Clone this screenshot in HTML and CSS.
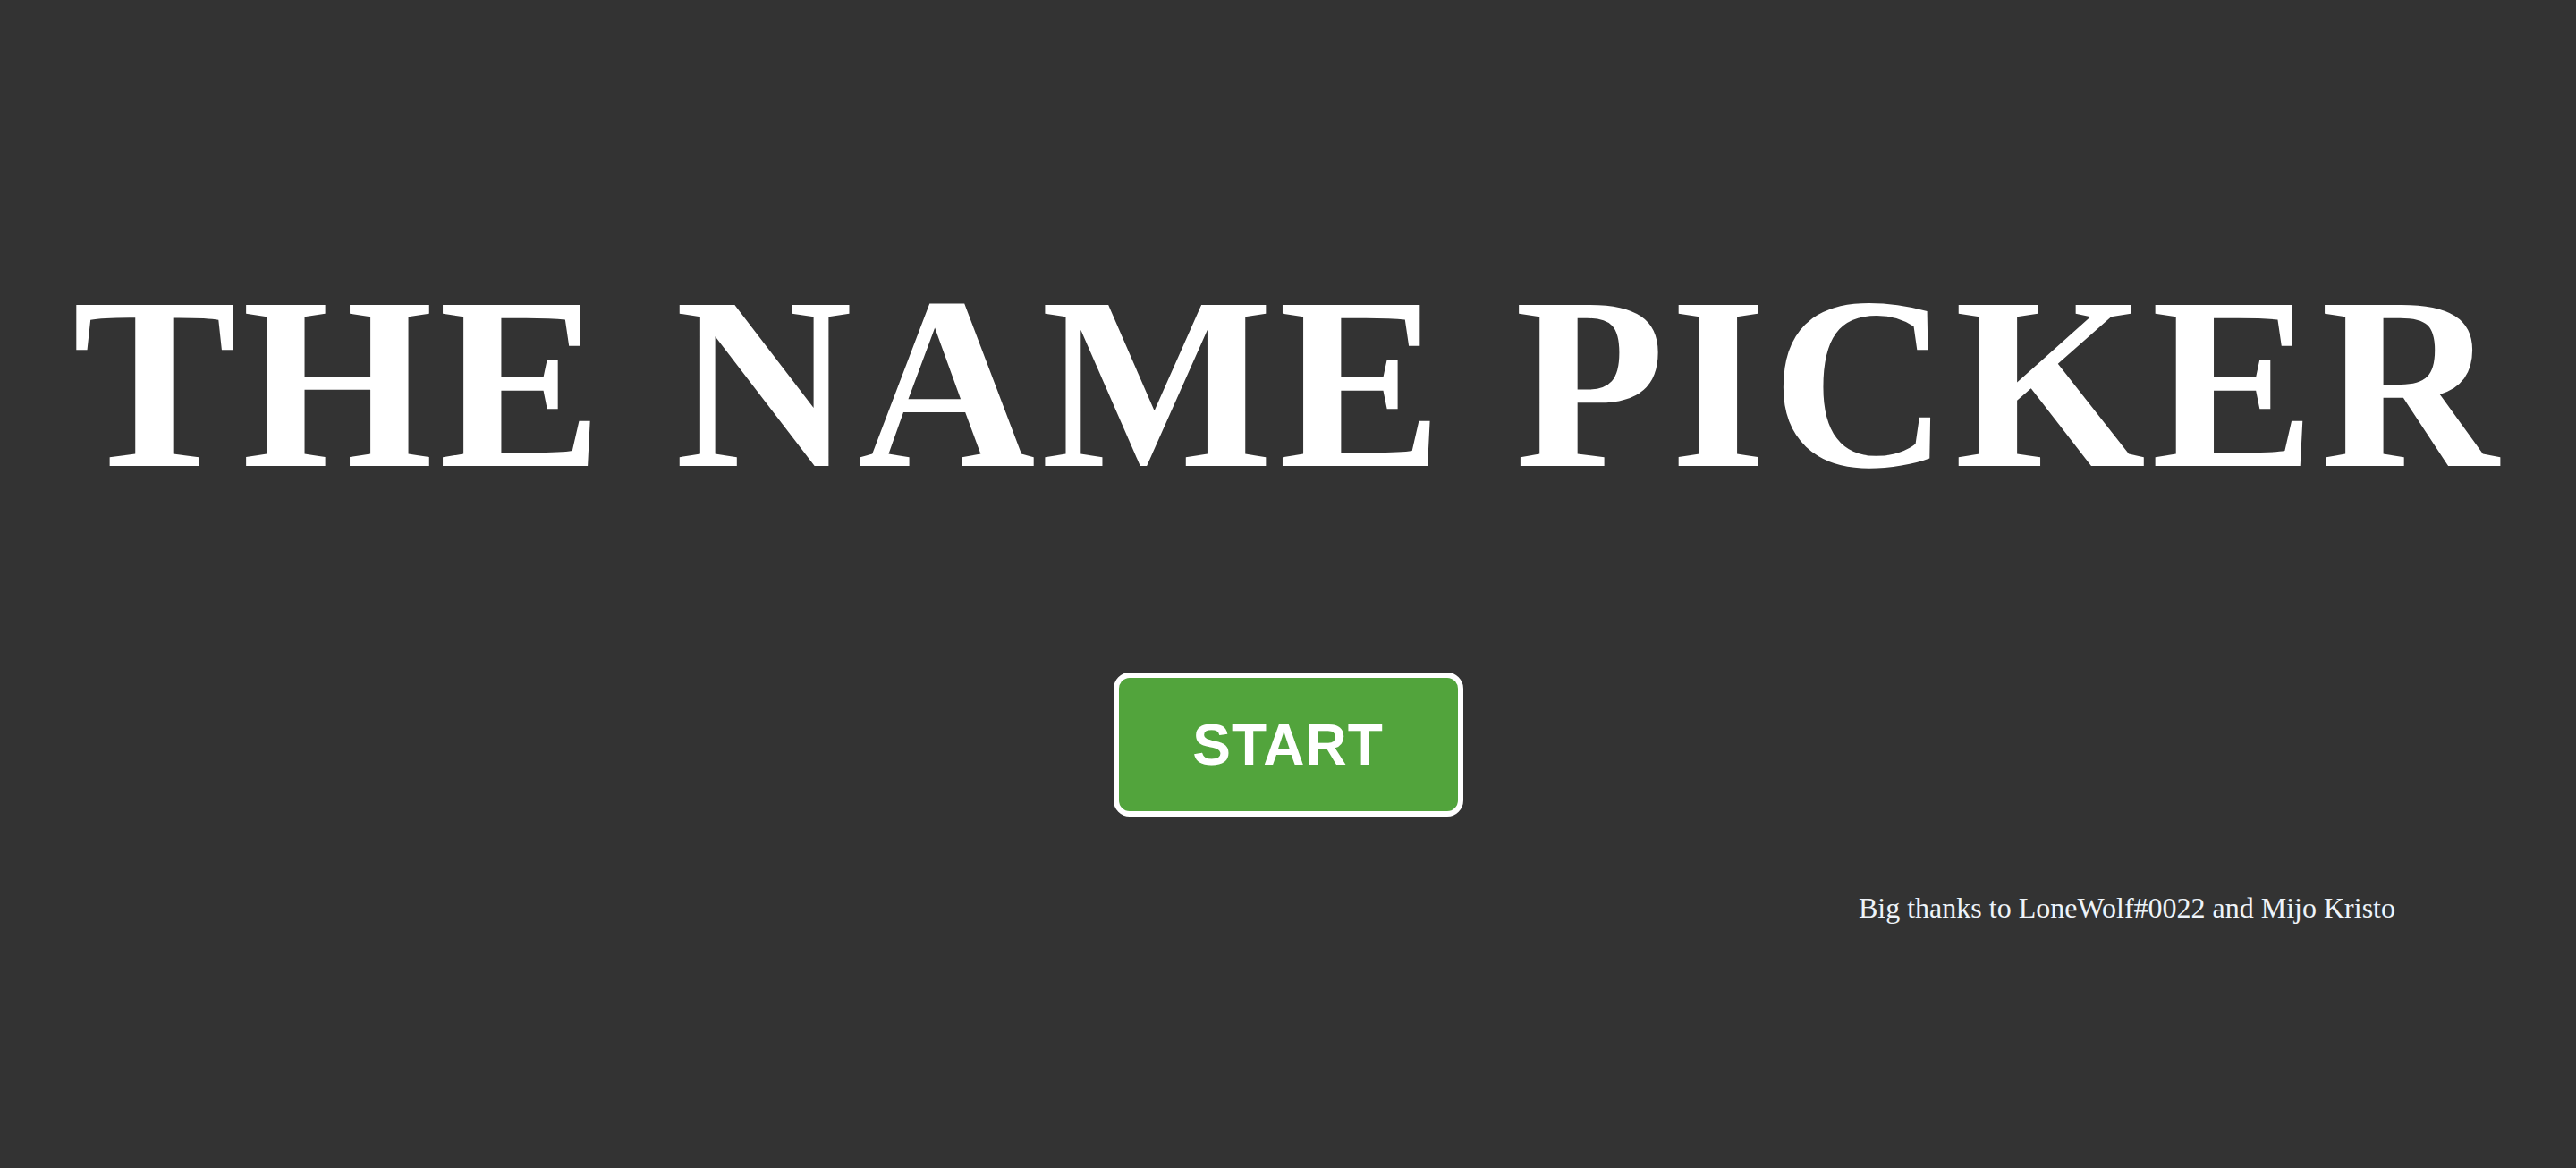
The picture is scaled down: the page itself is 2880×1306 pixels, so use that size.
FILE: index.html
```html
<!DOCTYPE html>
<html lang="en">
<head>
<meta charset="utf-8">
<title>The Name Picker</title>
<link rel="stylesheet" href="styles.css">
</head>
<body>
<main class="page">
  <h1 class="title">THE NAME PICKER</h1>
  <button class="start-btn" type="button">START</button>
  <div class="credits">
    <p class="thanks">Big thanks to LoneWolf#0022 and Mijo Kristo</p>
  </div>
</main>
</body>
</html>
```

FILE: styles.css
```css
html, body {
  margin: 0;
  padding: 0;
  background: #333333;
}

.page {
  display: flex;
  flex-direction: column;
  align-items: center;
  padding-top: 291px;
  min-height: 1306px;
  box-sizing: border-box;
}

.title {
  margin: 0;
  font-family: "Liberation Serif", "Times New Roman", serif;
  font-weight: bold;
  font-size: 275px;
  line-height: 1;
  letter-spacing: 6px;
  color: #ffffff;
  white-space: nowrap;
}

.start-btn {
  margin-top: 186px;
  width: 391px;
  height: 161px;
  box-sizing: border-box;
  border: 6px solid #ffffff;
  border-radius: 18px;
  background: #52a43c;
  color: #ffffff;
  font-family: "Liberation Sans", Arial, sans-serif;
  font-weight: bold;
  font-size: 64px;
  letter-spacing: 1px;
  display: flex;
  align-items: center;
  justify-content: center;
  padding: 0;
  cursor: pointer;
}

.credits {
  align-self: stretch;
  display: flex;
  justify-content: flex-end;
  padding-right: 202px;
  margin-top: 86px;
}

.thanks {
  margin: 0;
  font-family: "Liberation Serif", "Times New Roman", serif;
  font-size: 32px;
  line-height: 1;
  color: #eef3f9;
}
```
